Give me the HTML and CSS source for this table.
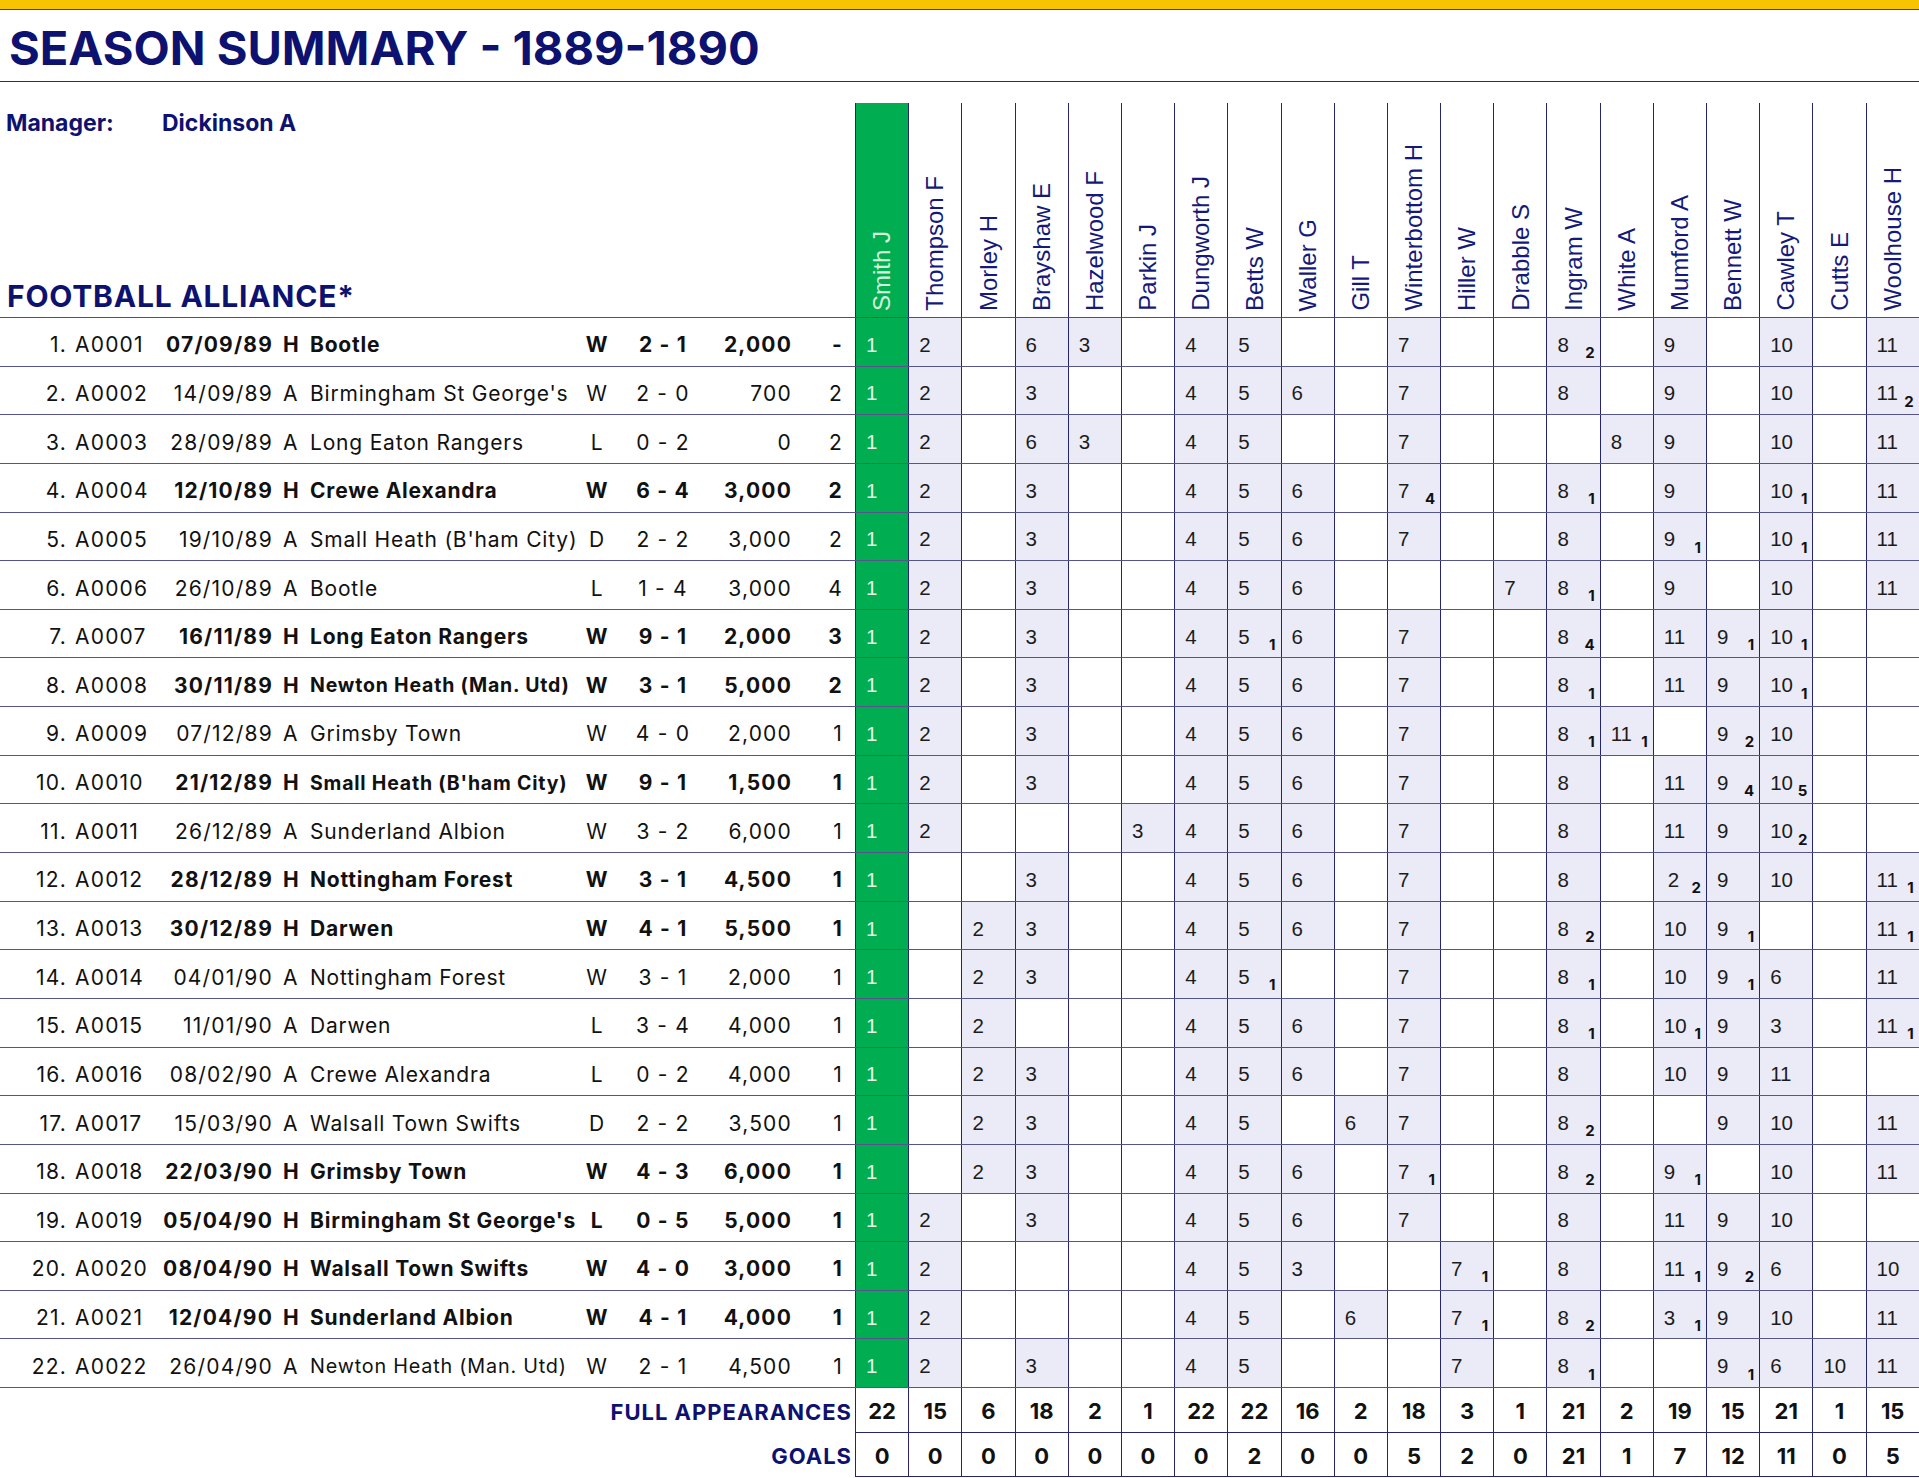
FILE: index.html
```html
<!DOCTYPE html>
<html lang="en">
<head>
<meta charset="utf-8">
<title>Season Summary 1889-1890</title>
<link rel="stylesheet" href="styles.css">
</head>
<body>
<div class="topbar"></div>
<h1 class="title">SEASON SUMMARY - 1889-1890</h1>

<div class="sheet">
  <div class="head">
    <div class="info">
      <div class="mgr"><span class="lbl">Manager:</span><span>Dickinson A</span></div>
      <div class="comp">FOOTBALL ALLIANCE*</div>
    </div>
    <div class="ph k"><span>Smith J</span></div>
    <div class="ph"><span>Thompson F</span></div>
    <div class="ph"><span>Morley H</span></div>
    <div class="ph"><span>Brayshaw E</span></div>
    <div class="ph"><span>Hazelwood F</span></div>
    <div class="ph"><span>Parkin J</span></div>
    <div class="ph"><span>Dungworth J</span></div>
    <div class="ph"><span>Betts W</span></div>
    <div class="ph"><span>Waller G</span></div>
    <div class="ph"><span>Gill T</span></div>
    <div class="ph"><span>Winterbottom H</span></div>
    <div class="ph"><span>Hiller W</span></div>
    <div class="ph"><span>Drabble S</span></div>
    <div class="ph"><span>Ingram W</span></div>
    <div class="ph"><span>White A</span></div>
    <div class="ph"><span>Mumford A</span></div>
    <div class="ph"><span>Bennett W</span></div>
    <div class="ph"><span>Cawley T</span></div>
    <div class="ph"><span>Cutts E</span></div>
    <div class="ph"><span>Woolhouse H</span></div>
  </div>

  <div class="row home"><span class="n">1.</span><span class="c">A0001</span><span class="d">07/09/89</span><span class="ha">H</span><span class="t">Bootle</span><span class="r">W</span><span class="s">2 - 1</span><span class="a">2,000</span><span class="p">-</span>
    <span class="k">1</span><span class="x">2</span><span class="e"></span><span class="x">6</span><span class="x">3</span><span class="e"></span><span class="x">4</span><span class="x">5</span><span class="e"></span><span class="e"></span><span class="x">7</span><span class="e"></span><span class="e"></span><span class="x">8<sub>2</sub></span><span class="e"></span><span class="x">9</span><span class="e"></span><span class="x">10</span><span class="e"></span><span class="x">11</span></div>

  <div class="row"><span class="n">2.</span><span class="c">A0002</span><span class="d">14/09/89</span><span class="ha">A</span><span class="t">Birmingham St George's</span><span class="r">W</span><span class="s">2 - 0</span><span class="a">700</span><span class="p">2</span>
    <span class="k">1</span><span class="x">2</span><span class="e"></span><span class="x">3</span><span class="e"></span><span class="e"></span><span class="x">4</span><span class="x">5</span><span class="x">6</span><span class="e"></span><span class="x">7</span><span class="e"></span><span class="e"></span><span class="x">8</span><span class="e"></span><span class="x">9</span><span class="e"></span><span class="x">10</span><span class="e"></span><span class="x">11<sub>2</sub></span></div>

  <div class="row"><span class="n">3.</span><span class="c">A0003</span><span class="d">28/09/89</span><span class="ha">A</span><span class="t">Long Eaton Rangers</span><span class="r">L</span><span class="s">0 - 2</span><span class="a">0</span><span class="p">2</span>
    <span class="k">1</span><span class="x">2</span><span class="e"></span><span class="x">6</span><span class="x">3</span><span class="e"></span><span class="x">4</span><span class="x">5</span><span class="e"></span><span class="e"></span><span class="x">7</span><span class="e"></span><span class="e"></span><span class="e"></span><span class="x">8</span><span class="x">9</span><span class="e"></span><span class="x">10</span><span class="e"></span><span class="x">11</span></div>

  <div class="row home"><span class="n">4.</span><span class="c">A0004</span><span class="d">12/10/89</span><span class="ha">H</span><span class="t">Crewe Alexandra</span><span class="r">W</span><span class="s">6 - 4</span><span class="a">3,000</span><span class="p">2</span>
    <span class="k">1</span><span class="x">2</span><span class="e"></span><span class="x">3</span><span class="e"></span><span class="e"></span><span class="x">4</span><span class="x">5</span><span class="x">6</span><span class="e"></span><span class="x">7<sub>4</sub></span><span class="e"></span><span class="e"></span><span class="x">8<sub>1</sub></span><span class="e"></span><span class="x">9</span><span class="e"></span><span class="x">10<sub>1</sub></span><span class="e"></span><span class="x">11</span></div>

  <div class="row"><span class="n">5.</span><span class="c">A0005</span><span class="d">19/10/89</span><span class="ha">A</span><span class="t">Small Heath (B'ham City)</span><span class="r">D</span><span class="s">2 - 2</span><span class="a">3,000</span><span class="p">2</span>
    <span class="k">1</span><span class="x">2</span><span class="e"></span><span class="x">3</span><span class="e"></span><span class="e"></span><span class="x">4</span><span class="x">5</span><span class="x">6</span><span class="e"></span><span class="x">7</span><span class="e"></span><span class="e"></span><span class="x">8</span><span class="e"></span><span class="x">9<sub>1</sub></span><span class="e"></span><span class="x">10<sub>1</sub></span><span class="e"></span><span class="x">11</span></div>

  <div class="row"><span class="n">6.</span><span class="c">A0006</span><span class="d">26/10/89</span><span class="ha">A</span><span class="t">Bootle</span><span class="r">L</span><span class="s">1 - 4</span><span class="a">3,000</span><span class="p">4</span>
    <span class="k">1</span><span class="x">2</span><span class="e"></span><span class="x">3</span><span class="e"></span><span class="e"></span><span class="x">4</span><span class="x">5</span><span class="x">6</span><span class="e"></span><span class="e"></span><span class="e"></span><span class="x">7</span><span class="x">8<sub>1</sub></span><span class="e"></span><span class="x">9</span><span class="e"></span><span class="x">10</span><span class="e"></span><span class="x">11</span></div>

  <div class="row home"><span class="n">7.</span><span class="c">A0007</span><span class="d">16/11/89</span><span class="ha">H</span><span class="t">Long Eaton Rangers</span><span class="r">W</span><span class="s">9 - 1</span><span class="a">2,000</span><span class="p">3</span>
    <span class="k">1</span><span class="x">2</span><span class="e"></span><span class="x">3</span><span class="e"></span><span class="e"></span><span class="x">4</span><span class="x">5<sub>1</sub></span><span class="x">6</span><span class="e"></span><span class="x">7</span><span class="e"></span><span class="e"></span><span class="x">8<sub>4</sub></span><span class="e"></span><span class="x">11</span><span class="x">9<sub>1</sub></span><span class="x">10<sub>1</sub></span><span class="e"></span><span class="e"></span></div>

  <div class="row home"><span class="n">8.</span><span class="c">A0008</span><span class="d">30/11/89</span><span class="ha">H</span><span class="t sm">Newton Heath (Man. Utd)</span><span class="r">W</span><span class="s">3 - 1</span><span class="a">5,000</span><span class="p">2</span>
    <span class="k">1</span><span class="x">2</span><span class="e"></span><span class="x">3</span><span class="e"></span><span class="e"></span><span class="x">4</span><span class="x">5</span><span class="x">6</span><span class="e"></span><span class="x">7</span><span class="e"></span><span class="e"></span><span class="x">8<sub>1</sub></span><span class="e"></span><span class="x">11</span><span class="x">9</span><span class="x">10<sub>1</sub></span><span class="e"></span><span class="e"></span></div>

  <div class="row"><span class="n">9.</span><span class="c">A0009</span><span class="d">07/12/89</span><span class="ha">A</span><span class="t">Grimsby Town</span><span class="r">W</span><span class="s">4 - 0</span><span class="a">2,000</span><span class="p">1</span>
    <span class="k">1</span><span class="x">2</span><span class="e"></span><span class="x">3</span><span class="e"></span><span class="e"></span><span class="x">4</span><span class="x">5</span><span class="x">6</span><span class="e"></span><span class="x">7</span><span class="e"></span><span class="e"></span><span class="x">8<sub>1</sub></span><span class="x">11<sub>1</sub></span><span class="e"></span><span class="x">9<sub>2</sub></span><span class="x">10</span><span class="e"></span><span class="e"></span></div>

  <div class="row home"><span class="n">10.</span><span class="c">A0010</span><span class="d">21/12/89</span><span class="ha">H</span><span class="t sm">Small Heath (B'ham City)</span><span class="r">W</span><span class="s">9 - 1</span><span class="a">1,500</span><span class="p">1</span>
    <span class="k">1</span><span class="x">2</span><span class="e"></span><span class="x">3</span><span class="e"></span><span class="e"></span><span class="x">4</span><span class="x">5</span><span class="x">6</span><span class="e"></span><span class="x">7</span><span class="e"></span><span class="e"></span><span class="x">8</span><span class="e"></span><span class="x">11</span><span class="x">9<sub>4</sub></span><span class="x">10<sub>5</sub></span><span class="e"></span><span class="e"></span></div>

  <div class="row"><span class="n">11.</span><span class="c">A0011</span><span class="d">26/12/89</span><span class="ha">A</span><span class="t">Sunderland Albion</span><span class="r">W</span><span class="s">3 - 2</span><span class="a">6,000</span><span class="p">1</span>
    <span class="k">1</span><span class="x">2</span><span class="e"></span><span class="e"></span><span class="e"></span><span class="x">3</span><span class="x">4</span><span class="x">5</span><span class="x">6</span><span class="e"></span><span class="x">7</span><span class="e"></span><span class="e"></span><span class="x">8</span><span class="e"></span><span class="x">11</span><span class="x">9</span><span class="x">10<sub>2</sub></span><span class="e"></span><span class="e"></span></div>

  <div class="row home"><span class="n">12.</span><span class="c">A0012</span><span class="d">28/12/89</span><span class="ha">H</span><span class="t">Nottingham Forest</span><span class="r">W</span><span class="s">3 - 1</span><span class="a">4,500</span><span class="p">1</span>
    <span class="k">1</span><span class="e"></span><span class="e"></span><span class="x">3</span><span class="e"></span><span class="e"></span><span class="x">4</span><span class="x">5</span><span class="x">6</span><span class="e"></span><span class="x">7</span><span class="e"></span><span class="e"></span><span class="x">8</span><span class="e"></span><span class="x in">2<sub>2</sub></span><span class="x">9</span><span class="x">10</span><span class="e"></span><span class="x">11<sub>1</sub></span></div>

  <div class="row home"><span class="n">13.</span><span class="c">A0013</span><span class="d">30/12/89</span><span class="ha">H</span><span class="t">Darwen</span><span class="r">W</span><span class="s">4 - 1</span><span class="a">5,500</span><span class="p">1</span>
    <span class="k">1</span><span class="e"></span><span class="x">2</span><span class="x">3</span><span class="e"></span><span class="e"></span><span class="x">4</span><span class="x">5</span><span class="x">6</span><span class="e"></span><span class="x">7</span><span class="e"></span><span class="e"></span><span class="x">8<sub>2</sub></span><span class="e"></span><span class="x">10</span><span class="x">9<sub>1</sub></span><span class="e"></span><span class="e"></span><span class="x">11<sub>1</sub></span></div>

  <div class="row"><span class="n">14.</span><span class="c">A0014</span><span class="d">04/01/90</span><span class="ha">A</span><span class="t">Nottingham Forest</span><span class="r">W</span><span class="s">3 - 1</span><span class="a">2,000</span><span class="p">1</span>
    <span class="k">1</span><span class="e"></span><span class="x">2</span><span class="x">3</span><span class="e"></span><span class="e"></span><span class="x">4</span><span class="x">5<sub>1</sub></span><span class="e"></span><span class="e"></span><span class="x">7</span><span class="e"></span><span class="e"></span><span class="x">8<sub>1</sub></span><span class="e"></span><span class="x">10</span><span class="x">9<sub>1</sub></span><span class="x">6</span><span class="e"></span><span class="x">11</span></div>

  <div class="row"><span class="n">15.</span><span class="c">A0015</span><span class="d">11/01/90</span><span class="ha">A</span><span class="t">Darwen</span><span class="r">L</span><span class="s">3 - 4</span><span class="a">4,000</span><span class="p">1</span>
    <span class="k">1</span><span class="e"></span><span class="x">2</span><span class="e"></span><span class="e"></span><span class="e"></span><span class="x">4</span><span class="x">5</span><span class="x">6</span><span class="e"></span><span class="x">7</span><span class="e"></span><span class="e"></span><span class="x">8<sub>1</sub></span><span class="e"></span><span class="x">10<sub>1</sub></span><span class="x">9</span><span class="x">3</span><span class="e"></span><span class="x">11<sub>1</sub></span></div>

  <div class="row"><span class="n">16.</span><span class="c">A0016</span><span class="d">08/02/90</span><span class="ha">A</span><span class="t">Crewe Alexandra</span><span class="r">L</span><span class="s">0 - 2</span><span class="a">4,000</span><span class="p">1</span>
    <span class="k">1</span><span class="e"></span><span class="x">2</span><span class="x">3</span><span class="e"></span><span class="e"></span><span class="x">4</span><span class="x">5</span><span class="x">6</span><span class="e"></span><span class="x">7</span><span class="e"></span><span class="e"></span><span class="x">8</span><span class="e"></span><span class="x">10</span><span class="x">9</span><span class="x">11</span><span class="e"></span><span class="e"></span></div>

  <div class="row"><span class="n">17.</span><span class="c">A0017</span><span class="d">15/03/90</span><span class="ha">A</span><span class="t">Walsall Town Swifts</span><span class="r">D</span><span class="s">2 - 2</span><span class="a">3,500</span><span class="p">1</span>
    <span class="k">1</span><span class="e"></span><span class="x">2</span><span class="x">3</span><span class="e"></span><span class="e"></span><span class="x">4</span><span class="x">5</span><span class="e"></span><span class="x">6</span><span class="x">7</span><span class="e"></span><span class="e"></span><span class="x">8<sub>2</sub></span><span class="e"></span><span class="e"></span><span class="x">9</span><span class="x">10</span><span class="e"></span><span class="x">11</span></div>

  <div class="row home"><span class="n">18.</span><span class="c">A0018</span><span class="d">22/03/90</span><span class="ha">H</span><span class="t">Grimsby Town</span><span class="r">W</span><span class="s">4 - 3</span><span class="a">6,000</span><span class="p">1</span>
    <span class="k">1</span><span class="e"></span><span class="x">2</span><span class="x">3</span><span class="e"></span><span class="e"></span><span class="x">4</span><span class="x">5</span><span class="x">6</span><span class="e"></span><span class="x">7<sub>1</sub></span><span class="e"></span><span class="e"></span><span class="x">8<sub>2</sub></span><span class="e"></span><span class="x">9<sub>1</sub></span><span class="e"></span><span class="x">10</span><span class="e"></span><span class="x">11</span></div>

  <div class="row home"><span class="n">19.</span><span class="c">A0019</span><span class="d">05/04/90</span><span class="ha">H</span><span class="t">Birmingham St George's</span><span class="r">L</span><span class="s">0 - 5</span><span class="a">5,000</span><span class="p">1</span>
    <span class="k">1</span><span class="x">2</span><span class="e"></span><span class="x">3</span><span class="e"></span><span class="e"></span><span class="x">4</span><span class="x">5</span><span class="x">6</span><span class="e"></span><span class="x">7</span><span class="e"></span><span class="e"></span><span class="x">8</span><span class="e"></span><span class="x">11</span><span class="x">9</span><span class="x">10</span><span class="e"></span><span class="e"></span></div>

  <div class="row home"><span class="n">20.</span><span class="c">A0020</span><span class="d">08/04/90</span><span class="ha">H</span><span class="t">Walsall Town Swifts</span><span class="r">W</span><span class="s">4 - 0</span><span class="a">3,000</span><span class="p">1</span>
    <span class="k">1</span><span class="x">2</span><span class="e"></span><span class="e"></span><span class="e"></span><span class="e"></span><span class="x">4</span><span class="x">5</span><span class="x">3</span><span class="e"></span><span class="e"></span><span class="x">7<sub>1</sub></span><span class="e"></span><span class="x">8</span><span class="e"></span><span class="x">11<sub>1</sub></span><span class="x">9<sub>2</sub></span><span class="x">6</span><span class="e"></span><span class="x">10</span></div>

  <div class="row home"><span class="n">21.</span><span class="c">A0021</span><span class="d">12/04/90</span><span class="ha">H</span><span class="t">Sunderland Albion</span><span class="r">W</span><span class="s">4 - 1</span><span class="a">4,000</span><span class="p">1</span>
    <span class="k">1</span><span class="x">2</span><span class="e"></span><span class="e"></span><span class="e"></span><span class="e"></span><span class="x">4</span><span class="x">5</span><span class="e"></span><span class="x">6</span><span class="e"></span><span class="x">7<sub>1</sub></span><span class="e"></span><span class="x">8<sub>2</sub></span><span class="e"></span><span class="x">3<sub>1</sub></span><span class="x">9</span><span class="x">10</span><span class="e"></span><span class="x">11</span></div>

  <div class="row"><span class="n">22.</span><span class="c">A0022</span><span class="d">26/04/90</span><span class="ha">A</span><span class="t sm2">Newton Heath (Man. Utd)</span><span class="r">W</span><span class="s">2 - 1</span><span class="a">4,500</span><span class="p">1</span>
    <span class="k">1</span><span class="x">2</span><span class="e"></span><span class="x">3</span><span class="e"></span><span class="e"></span><span class="x">4</span><span class="x">5</span><span class="e"></span><span class="e"></span><span class="e"></span><span class="x">7</span><span class="e"></span><span class="x">8<sub>1</sub></span><span class="e"></span><span class="e"></span><span class="x">9<sub>1</sub></span><span class="x">6</span><span class="x">10</span><span class="x">11</span></div>

  <div class="foot">
    <span class="lbl">FULL APPEARANCES</span>
    <span class="v">22</span><span class="v">15</span><span class="v">6</span><span class="v">18</span><span class="v">2</span><span class="v">1</span><span class="v">22</span><span class="v">22</span><span class="v">16</span><span class="v">2</span><span class="v">18</span><span class="v">3</span><span class="v">1</span><span class="v">21</span><span class="v">2</span><span class="v">19</span><span class="v">15</span><span class="v">21</span><span class="v">1</span><span class="v">15</span>
  </div>
  <div class="foot">
    <span class="lbl">GOALS</span>
    <span class="v">0</span><span class="v">0</span><span class="v">0</span><span class="v">0</span><span class="v">0</span><span class="v">0</span><span class="v">0</span><span class="v">2</span><span class="v">0</span><span class="v">0</span><span class="v">5</span><span class="v">2</span><span class="v">0</span><span class="v">21</span><span class="v">1</span><span class="v">7</span><span class="v">12</span><span class="v">11</span><span class="v">0</span><span class="v">5</span>
  </div>
</div>
</body>
</html>
```

FILE: styles.css
```css
* {
  box-sizing: border-box;
  margin: 0;
  padding: 0;
}

html, body {
  background: #ffffff;
}

body {
  width: 1919px;
  overflow: hidden;
  font-family: Inter, "Liberation Sans", sans-serif;
  color: #111111;
}

.topbar {
  height: 10px;
  background: #f6c400;
  border-bottom: 1px solid #4d4528;
}

.title {
  height: 72px;
  padding: 14px 0 0 9px;
  border-bottom: 1px solid #262c7a;
  font-size: 47px;
  line-height: 47px;
  font-weight: 700;
  color: #0d1170;
}

.sheet {
  margin-top: 21px;
}

/* header */
.head {
  display: grid;
  grid-template-columns: 855px repeat(20, 53.2px);
  height: 215px;
  border-bottom: 1px solid #4e4e86;
}

.info {
  display: flex;
  flex-direction: column;
  justify-content: space-between;
  padding: 6px 0 3px 0;
  color: #0d1170;
  font-weight: 700;
}

.mgr {
  display: flex;
  font-size: 23px;
  line-height: 28px;
}

.mgr .lbl {
  width: 162px;
  padding-left: 6px;
}

.comp {
  font-size: 30px;
  line-height: 36px;
  padding-left: 7px;
  letter-spacing: 0.8px;
}

.ph {
  display: flex;
  justify-content: center;
  align-items: flex-end;
  padding-bottom: 6px;
  border-left: 1px solid #25256f;
  font-family: "Liberation Sans", Arial, sans-serif;
  font-size: 24px;
  color: #151a7a;
}

.ph span {
  writing-mode: vertical-rl;
  transform: rotate(180deg);
  white-space: nowrap;
  line-height: 1.15;
}

.ph.k {
  background: #00ad50;
  color: #d4f3dc;
}

/* data rows */
.row {
  display: grid;
  grid-template-columns: 68px 92px 117px 30px 270px 40px 92px 84px 62px repeat(20, 53.2px);
  height: 48.65px;
  border-bottom: 1px solid #55558b;
  font-size: 21px;
  letter-spacing: 0.8px;
}

.row > span {
  display: flex;
  align-items: center;
  padding-top: 6px;
  white-space: nowrap;
  overflow: hidden;
}

.n, .c, .d, .s, .a, .p {
  letter-spacing: 1.2px;
}

.n { justify-content: flex-end; padding-right: 1px; }
.c { padding-left: 7px; }
.d { justify-content: flex-end; padding-right: 4px; }
.ha { padding-left: 6px; }
.row > .t { padding-left: 3px; overflow: visible; }
.r { justify-content: center; }
.s { justify-content: center; }
.a { justify-content: flex-end; padding-right: 1px; }
.p { justify-content: flex-end; padding-right: 12px; }

.row > .t.sm { font-size: 19.5px; }
.row > .t.sm2 { font-size: 19.8px; }

.home .d, .home .ha, .home .t, .home .r,
.home .s, .home .a, .home .p {
  font-weight: 700;
}

.row .k, .row .x, .row .e {
  border-left: 1px solid #25256f;
  padding-left: 10px;
  padding-right: 5px;
  font-family: "Liberation Sans", Arial, sans-serif;
  font-size: 20.5px;
  letter-spacing: 0;
  color: #1c1c1c;
}

.row .x {
  background: #ebebf7;
}

.row .x.in {
  padding-left: 14px;
}

.row .k {
  background: #00ad50;
  color: #e4f7e9;
}

.row sub {
  margin-left: auto;
  align-self: flex-end;
  margin-bottom: 5.5px;
  font-family: Inter, "Liberation Sans", sans-serif;
  font-weight: 700;
  font-size: 15px;
  line-height: 15px;
  vertical-align: baseline;
  color: #111;
}

/* footer */
.foot {
  display: grid;
  grid-template-columns: 855px repeat(20, 53.2px);
  height: 44.5px;
}

.foot > span {
  display: flex;
  align-items: center;
  padding-top: 3px;
  font-weight: 700;
  font-size: 22px;
}

.foot .lbl {
  justify-content: flex-end;
  padding-right: 3px;
  color: #0d1170;
  letter-spacing: 1px;
}

.foot .v {
  justify-content: center;
  border-left: 1px solid #25256f;
  border-bottom: 1px solid #25256f;
  color: #111;
}
```
